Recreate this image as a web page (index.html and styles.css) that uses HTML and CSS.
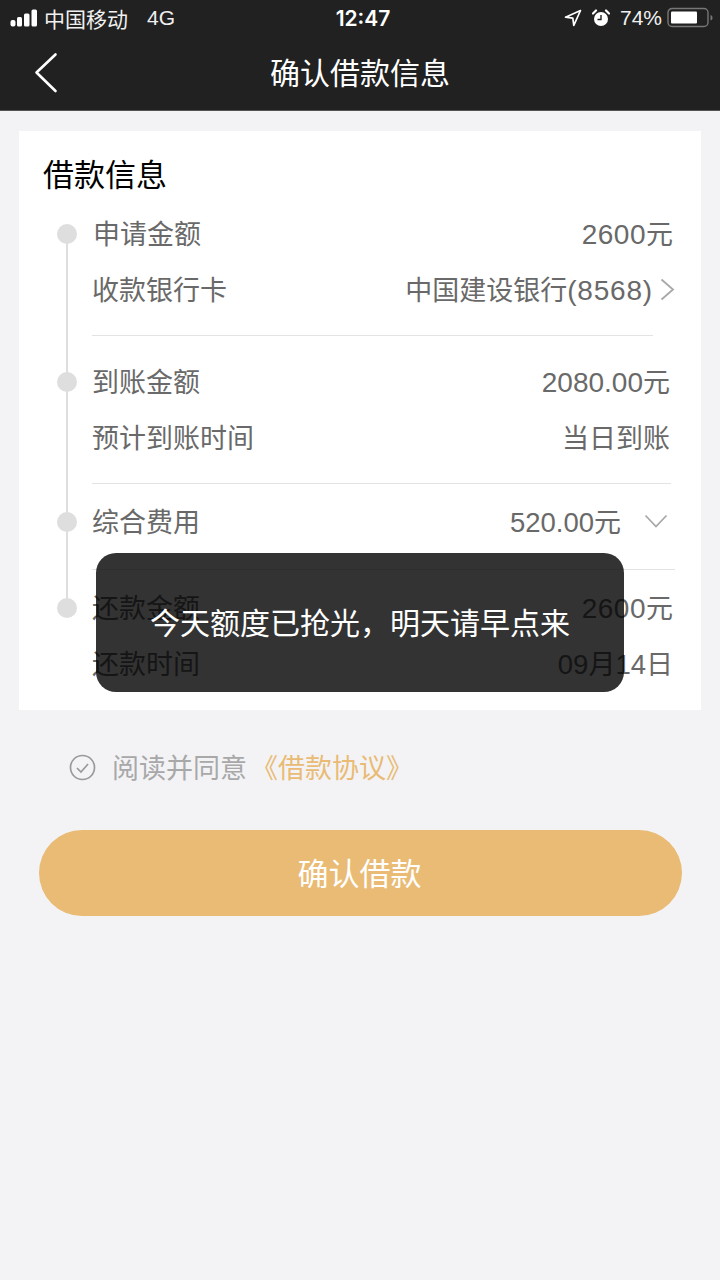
FILE: index.html
```html
<!DOCTYPE html>
<html lang="zh-CN">
<head>
<meta charset="utf-8">
<title>确认借款信息</title>
<link rel="stylesheet" href="styles.css">
</head>
<body>
<div class="screen">
  <header class="top">
    <div class="status">
      <div class="status-left">
        <svg class="signal" width="28" height="18" viewBox="0 0 28 18"><rect x="0.500" y="11" width="5" height="6.500" rx="2" fill="#fff"/><rect x="7" y="8" width="5" height="9.500" rx="1.500" fill="#fff"/><rect x="14" y="4.500" width="5.500" height="13" rx="1.500" fill="#fff"/><rect x="21.500" y="0.500" width="5.500" height="17" rx="1.500" fill="#fff"/></svg>
        <span class="carrier">中国移动</span>
        <span class="net">4G</span>
      </div>
      <div class="clock">12:47</div>
      <div class="status-right">
        <svg class="loc" width="18" height="18" viewBox="0 0 18 18"><path d="M16.500 1.500 1.500 8.200l7.300.9 1 7.300z" fill="none" stroke="#fff" stroke-width="1.700" stroke-linejoin="round"/></svg>
        <svg class="alarm" width="18" height="18" viewBox="0 0 18 18"><circle cx="9" cy="10" r="7" fill="#fff"/><path d="M9 6v4.500H5.500" fill="none" stroke="#212121" stroke-width="1.400"/><path d="M1 4.500 4 1.500M17 4.500l-3-3" stroke="#fff" stroke-width="2.200" stroke-linecap="round"/></svg>
        <span class="pct">74%</span>
        <svg class="battery" width="47" height="22" viewBox="0 0 47 22"><rect x="1" y="1.500" width="40" height="18" rx="4" fill="none" stroke="#777" stroke-width="1.400"/><rect x="4" y="4.500" width="26" height="12" rx="1" fill="#fff"/><path d="M43.500 8v5.500c1.500-.3 2-1.500 2-2.700s-.5-2.500-2-2.800z" fill="#777"/></svg>
      </div>
    </div>
    <nav class="nav">
      <svg class="back" width="26" height="42" viewBox="0 0 26 42"><path d="M22.500 2.500 3.500 20.500l19 18.500" fill="none" stroke="#fff" stroke-width="2.600" stroke-linecap="round" stroke-linejoin="round"/></svg>
      <h1 class="nav-title">确认借款信息</h1>
    </nav>
  </header>

  <main class="main">
    <section class="card">
      <h2 class="card-title">借款信息</h2>
      <div class="timeline">
        <div class="group group-a">
          <div class="row row-first"><span class="label">申请金额</span><span class="value"><span class="num num-loose">2600</span>元</span></div>
          <div class="row row-bank"><span class="label">收款银行卡</span><span class="value">中国建设银行<span class="num num-wide">(8568)</span></span>
            <svg class="chev-right" width="15" height="23" viewBox="0 0 15 23"><path d="M1.500 1.500 13 11.500 1.500 21.500" fill="none" stroke="#a8a8a8" stroke-width="1.800"/></svg>
          </div>
        </div>
        <div class="group group-b">
          <div class="row"><span class="label">到账金额</span><span class="value"><span class="num">2080.00</span>元</span></div>
          <div class="row"><span class="label">预计到账时间</span><span class="value">当日到账</span></div>
        </div>
        <div class="group group-c">
          <div class="row row-fee"><span class="label">综合费用</span><span class="value"><span class="num num-tight">520.00</span>元</span>
            <svg class="chev-down" width="24" height="15" viewBox="0 0 24 15"><path d="M1.500 1.500 12 12.500 22.500 1.500" fill="none" stroke="#a8a8a8" stroke-width="1.800"/></svg>
          </div>
        </div>
        <div class="group group-d">
          <div class="row"><span class="label">还款金额</span><span class="value"><span class="num num-loose">2600</span>元</span></div>
          <div class="row"><span class="label">还款时间</span><span class="value"><span class="num num-tight">09</span>月<span class="num num-tight">14</span>日</span></div>
        </div>
      </div>
    </section>

    <div class="agree">
      <svg class="check" width="27" height="27" viewBox="0 0 27 27"><circle cx="13.500" cy="13.500" r="12" fill="none" stroke="#999" stroke-width="1.700"/><path d="M8 14l4 4 7-8" fill="none" stroke="#999" stroke-width="1.700"/></svg>
      <span class="agree-text">阅读并同意</span><span class="agree-link">《借款协议》</span>
    </div>

    <button class="submit" type="button">确认借款</button>
  </main>

  <div class="toast">今天额度已抢光，明天请早点来</div>
</div>
</body>
</html>
```
FILE: styles.css
```css
* { box-sizing: border-box; }
html, body { margin: 0; padding: 0; }
body {
  width: 720px;
  height: 1280px;
  overflow: hidden;
  background: #f3f3f6;
  font-family: "Liberation Sans", "Noto Sans CJK SC", sans-serif;
}
.screen { position: relative; width: 720px; height: 1280px; }

.top { height: 111px; background: #212121; color: #fff; border-bottom: 1px solid #555; }
.status {
  height: 36px;
  display: grid;
  grid-template-columns: 1fr auto 1fr;
  align-items: center;
  padding: 0 6px 0 10px;
}
.status-left { display: flex; align-items: center; }
.signal { margin-right: 6px; }
.carrier { font-size: 21px; color: #f0f0f0; }
.net { font-size: 21px; margin-left: 19px; color: #f0f0f0; }
.clock { font-family: Inter, "Liberation Sans", sans-serif; font-size: 21px; font-weight: 600; padding-left: 2px; }
.status-right { display: flex; align-items: center; justify-content: flex-end; }
.loc { margin-right: 10px; }
.alarm { margin-right: 10px; }
.pct { font-size: 21px; margin-right: 5px; color: #f0f0f0; }

.nav { height: 74px; display: flex; align-items: center; justify-content: center; position: relative; }
.back { position: absolute; left: 33px; top: 16px; }
.nav-title { margin: 0 0 5px; font-size: 30px; font-weight: 400; color: #fff; }

.main { padding: 20px 19px 0; }
.card { background: #fff; height: 579px; padding: 25px 0 0 24px; }
.card-title { margin: 0; font-size: 31px; line-height: 40px; font-weight: 400; color: #000; }

.timeline { margin-top: 10px; padding-left: 49px; position: relative; font-size: 27px; color: #696969; }
.timeline::before {
  content: "";
  position: absolute;
  left: 23px;
  top: 28px;
  width: 2px;
  height: 374px;
  background: #dedede;
}
.num { font-size: 28px; }
.num-loose { letter-spacing: .5px; }
.num-wide { letter-spacing: .8px; }
.num-tight { font-size: 27.500px; }
.group { position: relative; border-bottom: 1px solid #e3e3e3; }
.group::before {
  content: "";
  position: absolute;
  left: -35px;
  width: 20px;
  height: 20px;
  border-radius: 50%;
  background: #dedede;
}
.group-a { width: 561px; height: 130px; }
.group-a::before { top: 18px; }
.group-b { width: 579px; height: 148px; padding-top: 18px; }
.group-b::before { top: 36px; }
.group-c { width: 583px; height: 86px; padding-top: 10px; }
.group-c::before { top: 28px; }
.group-d { width: 583px; border-bottom: 0; padding-top: 10px; }
.group-d::before { top: 28px; }

.row { height: 56px; padding-bottom: 4px; display: flex; align-items: center; justify-content: space-between; }
.row-first .label { margin-left: 1px; }
.row-first { width: 581px; }
.row-bank { width: 583px; }
.row-bank .value { margin-left: auto; margin-right: 7px; }
.chev-right { flex: none; margin-top: 2px; }
.group-b .row { padding-right: 1px; }
.row-fee .value { margin-left: auto; margin-right: 23px; }
.chev-down { flex: none; margin-top: 2px; margin-right: 7px; }
.group-d .row { padding-right: 2px; }

.agree { display: flex; align-items: center; height: 40px; margin-top: 36px; padding-left: 50px; font-size: 27px; }
.check { margin-right: 16px; margin-top: 2px; }
.agree-text { color: #a8a8a8; }
.agree-link { color: #e9bb74; margin-left: 4px; }

.submit {
  display: block;
  width: 643px;
  height: 86px;
  margin: 44px 0 0 19.500px;
  border: 0;
  border-radius: 43px;
  background: #e9bb74;
  color: #fff;
  font: inherit;
  font-size: 31px;
  padding: 0 1px 3px 0;
}

.toast {
  position: absolute;
  left: 96px;
  top: 553px;
  width: 528px;
  height: 139px;
  padding-bottom: 3px;
  border-radius: 20px;
  background: rgba(0, 0, 0, .8);
  color: #fff;
  font-size: 30px;
  display: flex;
  align-items: center;
  justify-content: center;
}
```
